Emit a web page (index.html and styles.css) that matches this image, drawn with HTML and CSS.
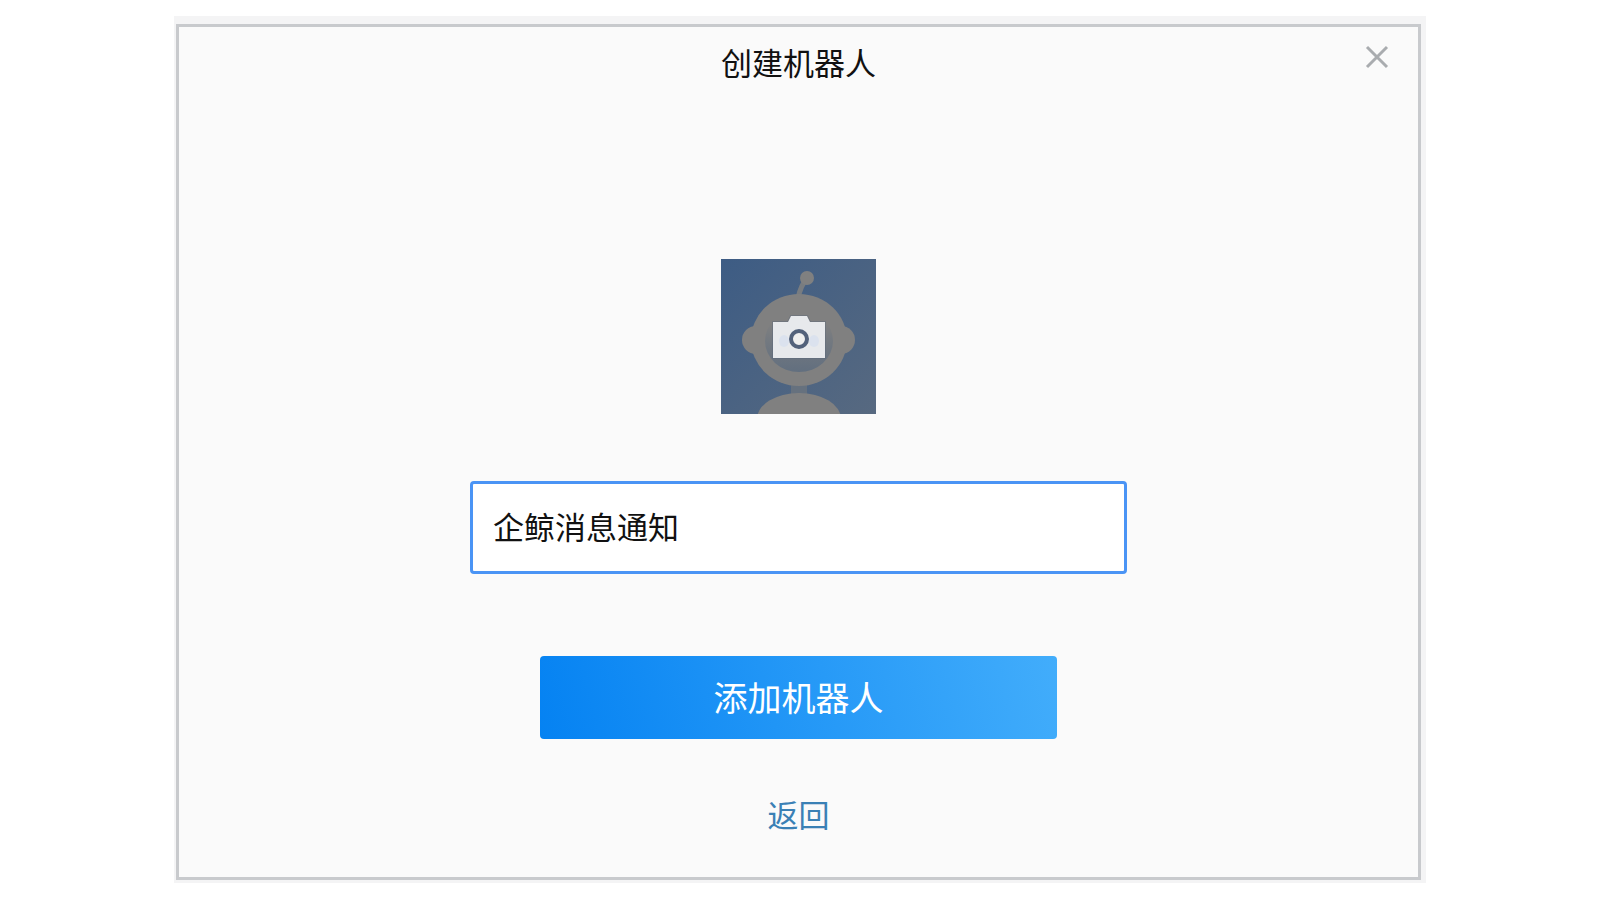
FILE: index.html
```html
<!DOCTYPE html>
<html lang="zh-CN">
<head>
    <meta charset="utf-8" />
    <title>创建机器人</title>
    <link rel="stylesheet" href="styles.css">
</head>
<body>
    <div class="dialog-wrap">
        <form class="dialog">
            <button type="button" class="close" aria-label="关闭">
                <svg width="24" height="24" viewBox="0 0 24 24">
                    <path d="M2 2L22 22M22 2L2 22" fill="none" stroke="#a9acaf" stroke-width="3" />
                </svg>
            </button>
            <h1 class="title">创建机器人</h1>

            <!--头像-->
            <button type="button" class="avatar" aria-label="修改头像">
                <svg viewBox="0 0 155 155">
                    <defs>
                        <linearGradient id="bg" x1="0" y1="0" x2="1" y2="1">
                            <stop offset="0" stop-color="#3d5c84" />
                            <stop offset="1" stop-color="#576980" />
                        </linearGradient>
                        <linearGradient id="face" x1="0" y1="0" x2="0" y2="1">
                            <stop offset="0.2" stop-color="#808080" />
                            <stop offset="0.5" stop-color="#737980" />
                            <stop offset="1" stop-color="#626f7f" />
                        </linearGradient>
                    </defs>
                    <rect width="155" height="155" fill="url(#bg)" />
                    <path d="M86 19Q80 26 77 39" fill="none" stroke="#787c80" stroke-width="5" />
                    <circle cx="86" cy="19" r="7" fill="#808080" />
                    <rect x="70" y="122" width="16" height="16" fill="#66717e" />
                    <ellipse cx="78" cy="160" rx="42" ry="26" fill="#808080" />
                    <circle cx="35" cy="81" r="14" fill="#808080" />
                    <circle cx="120" cy="81" r="14" fill="#808080" />
                    <ellipse cx="78" cy="81" rx="48" ry="46" fill="#808080" />
                    <ellipse cx="78" cy="82" rx="34" ry="31" fill="url(#face)" />
                    <path d="M52 63H67L70 57H86L89 63H104V99H52Z" fill="#e7e9ec" stroke="#596679" stroke-opacity="0.4" stroke-width="2" paint-order="stroke" />
                    <ellipse cx="63" cy="82" rx="5" ry="6" fill="#dbe2ee" />
                    <ellipse cx="93" cy="82" rx="5" ry="6" fill="#dbe2ee" />
                    <circle cx="78" cy="80" r="8" fill="#eeeeee" stroke="#52617a" stroke-width="4" />
                </svg>
            </button>

            <input type="text" class="name" aria-label="机器人名称" value="企鲸消息通知">
            <button type="submit" class="submit">添加机器人</button>
            <a href="#" class="back">返回</a>
        </form>
    </div>
</body>
</html>
```
FILE: styles.css
```css
* {
    box-sizing: border-box;
}

body {
    margin: 0;
    padding: 16px;
    background-color: #fff;
    font-family: "Liberation Sans", "Noto Sans CJK SC", sans-serif;
    font-size: 31px;
    line-height: 46px;
}

button,
input {
    font-family: inherit;
    margin: 0;
}

.dialog-wrap {
    max-width: 1252px;
    margin: 0 auto;
    padding: 8px 5px 3px 2px;
    background-color: #f4f4f5;
}

.dialog {
    position: relative;
    display: flex;
    flex-direction: column;
    align-items: center;
    padding: 15px 24px 37px;
    border: 3px solid #c8cacd;
    background-color: #fafafa;
}

.close {
    position: absolute;
    top: 18px;
    right: 29px;
    padding: 0;
    border: 0;
    background: none;
    cursor: pointer;
}

    .close svg {
        display: block;
    }

.title {
    margin: 0 0 171px;
    color: #111;
    font-size: 31px;
    font-weight: normal;
}

.avatar {
    width: 155px;
    height: 155px;
    margin-bottom: 67px;
    padding: 0;
    border: 0;
    background: none;
    cursor: pointer;
}

    .avatar svg {
        display: block;
    }

.name {
    width: 657px;
    max-width: 100%;
    height: 93px;
    margin-bottom: 82px;
    padding: 0 20px 4px;
    border: 3px solid #4a94f5;
    border-radius: 4px;
    background-color: #fff;
    color: #111;
    font-size: 31px;
    outline: none;
}

.submit {
    width: 517px;
    max-width: 100%;
    height: 83px;
    margin-bottom: 55px;
    padding: 0 0 3px;
    border: 0;
    border-radius: 4px;
    background: linear-gradient(75deg, #0582f2, #42adfb);
    color: #fff;
    font-size: 34px;
    cursor: pointer;
}

.back {
    color: #3a80b5;
    text-decoration: none;
}
```
